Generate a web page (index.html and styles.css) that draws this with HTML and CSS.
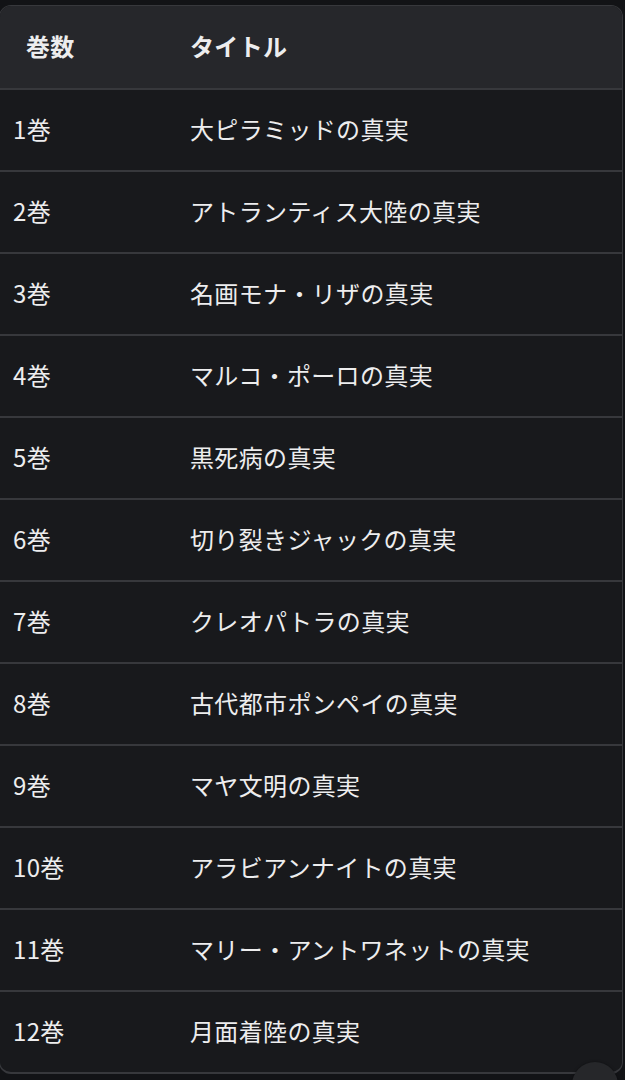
FILE: index.html
```html
<!DOCTYPE html>
<html lang="ja">
<head>
    <meta charset="UTF-8">
    <meta name="viewport" content="width=device-width, initial-scale=1.0">
    <title>巻数とタイトル</title>
    <link rel="stylesheet" href="styles.css">
</head>
<body>
    <div class="table-wrap">
        <div class="row head">
            <div class="cell num">巻数</div>
            <div class="cell title">タイトル</div>
        </div>
        <div class="row"><div class="cell num">1巻</div><div class="cell title">大ピラミッドの真実</div></div>
        <div class="row"><div class="cell num">2巻</div><div class="cell title">アトランティス大陸の真実</div></div>
        <div class="row"><div class="cell num">3巻</div><div class="cell title">名画モナ・リザの真実</div></div>
        <div class="row"><div class="cell num">4巻</div><div class="cell title">マルコ・ポーロの真実</div></div>
        <div class="row"><div class="cell num">5巻</div><div class="cell title">黒死病の真実</div></div>
        <div class="row"><div class="cell num">6巻</div><div class="cell title">切り裂きジャックの真実</div></div>
        <div class="row"><div class="cell num">7巻</div><div class="cell title">クレオパトラの真実</div></div>
        <div class="row"><div class="cell num">8巻</div><div class="cell title">古代都市ポンペイの真実</div></div>
        <div class="row"><div class="cell num">9巻</div><div class="cell title">マヤ文明の真実</div></div>
        <div class="row"><div class="cell num">10巻</div><div class="cell title">アラビアンナイトの真実</div></div>
        <div class="row"><div class="cell num">11巻</div><div class="cell title">マリー・アントワネットの真実</div></div>
        <div class="row"><div class="cell num">12巻</div><div class="cell title">月面着陸の真実</div></div>
    </div>

    <div class="scroll-btn"></div>
</body>
</html>
```

FILE: styles.css
```css
body {
    margin: 0;
    background: #121316;
    color: #ededee;
    font-family: "Noto Sans CJK JP", "Noto Sans", sans-serif;
    height: 1080px;
    overflow: hidden;
    position: relative;
}
.table-wrap {
    margin: 5px 2px 0 -1px;
    background: #18191c;
    border: 1px solid #37383c;
    border-bottom-width: 2px;
    border-radius: 12px;
    overflow: hidden;
}
.row {
    display: flex;
    align-items: center;
    height: 82px;
    padding-bottom: 3px;
    box-sizing: border-box;
    border-bottom: 2px solid #37383c;
    font-size: 24px;
    letter-spacing: 0.35px;
}
.row:last-child {
    border-bottom: none;
    height: 80px;
}
.head {
    height: 84px;
    background: #26272b;
    font-weight: bold;
}
.cell.num {
    width: 177px;
    padding-left: 13px;
    flex-shrink: 0;
}
.head .cell.num {
    width: 164px;
    padding-left: 26px;
}
.cell.title {
    flex: 1;
}
.scroll-btn {
    position: absolute;
    left: 572px;
    top: 1062px;
    width: 46px;
    height: 46px;
    border-radius: 50%;
    background: #26272a;
    box-shadow: 0 0 3px rgba(0, 0, 0, 0.4);
}
```
